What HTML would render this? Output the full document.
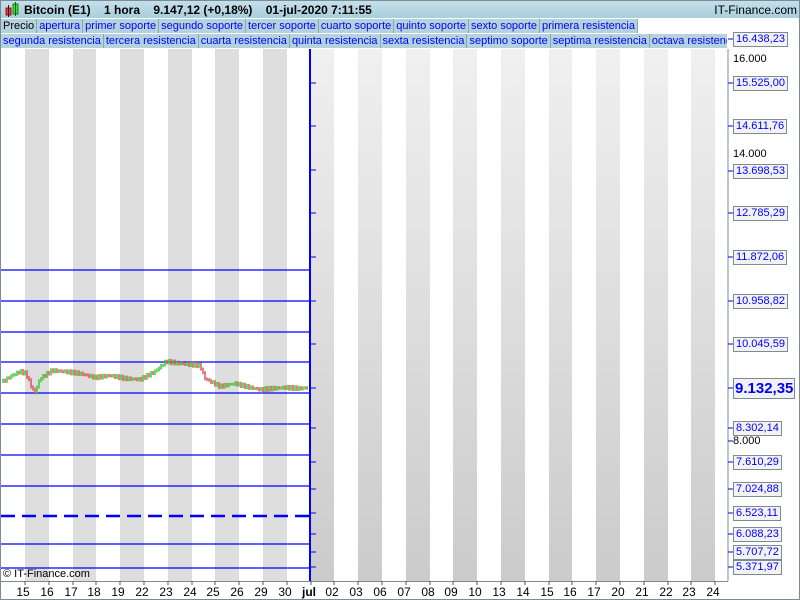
<!DOCTYPE html>
<html><head><meta charset="utf-8"><style>
body{margin:0;width:800px;height:600px;overflow:hidden;background:#fff;font-family:"Liberation Sans",sans-serif;position:relative}
#frame{position:absolute;left:0;top:0;width:798px;height:598px;border:1px solid #7a8c96}
#title{position:absolute;left:1px;top:1px;width:798px;height:17px;background:linear-gradient(#c5e0ea,#a8cedc);font-size:12px;font-weight:bold;line-height:18px}
.row{position:absolute;left:1px;height:15px;font-size:11px;line-height:14px;white-space:nowrap}
.row span{display:inline-block;background:#b4d2de;color:#00f;border-right:1px solid #8aa;padding:0 2px;margin-right:0;height:14px}
.lab{position:absolute;left:733px;font-size:11px;line-height:13px;color:#00f;background:#f2f2f2;border:1px solid #7d8c94;padding:0 2px}
.plain{position:absolute;left:733px;font-size:11px;color:#000}
.xl{position:absolute;top:585px;font-size:12px;color:#000;transform:translateX(-50%)}
</style></head><body>
<svg id="c" width="800" height="600" style="position:absolute;left:0;top:0"></svg>
<div id="frame"></div>
<div id="title"><svg width="16" height="16" style="position:absolute;left:3px;top:1px"><rect x="2" y="6" width="5" height="7" fill="#e04040" stroke="#600" stroke-width=".8"/><line x1="4.5" y1="3" x2="4.5" y2="15" stroke="#600"/><rect x="9" y="2" width="5" height="10" fill="#40e040" stroke="#060" stroke-width=".8"/><line x1="11.5" y1="0" x2="11.5" y2="14" stroke="#060"/></svg><span style="position:absolute;left:23px">Bitcoin (E1) &nbsp;&nbsp; 1 hora &nbsp;&nbsp; 9.147,12 (+0,18%) &nbsp;&nbsp; 01-jul-2020 7:11:55</span><span style="position:absolute;right:2px;font-weight:normal;font-size:12px">IT-Finance.com</span></div>
<div class="row" style="top:19px"><span style="color:#000">Precio</span><span>apertura</span><span>primer soporte</span><span>segundo soporte</span><span>tercer soporte</span><span>cuarto soporte</span><span>quinto soporte</span><span>sexto soporte</span><span>primera resistencia</span></div>
<div class="row" style="top:34px;width:726px;overflow:hidden"><span>segunda resistencia</span><span>tercera resistencia</span><span>cuarta resistencia</span><span>quinta resistencia</span><span>sexta resistencia</span><span>septimo soporte</span><span>septima resistencia</span><span>octava resistencia</span></div>
<div class="lab" style="top:32px">16.438,23</div>
<div class="plain" style="top:53px">16.000</div>
<div class="lab" style="top:76px">15.525,00</div>
<div class="lab" style="top:119px">14.611,76</div>
<div class="plain" style="top:148px">14.000</div>
<div class="lab" style="top:164px">13.698,53</div>
<div class="lab" style="top:206px">12.785,29</div>
<div class="lab" style="top:250px">11.872,06</div>
<div class="lab" style="top:294px">10.958,82</div>
<div class="lab" style="top:337px">10.045,59</div>
<div class="lab" style="top:378px;font-size:15px;font-weight:bold;line-height:19px;padding:0 1px">9.132,35</div>
<div class="lab" style="top:421px">8.302,14</div>
<div class="plain" style="top:435px">8.000</div>
<div class="lab" style="top:455px">7.610,29</div>
<div class="lab" style="top:482px">7.024,88</div>
<div class="lab" style="top:506px">6.523,11</div>
<div class="lab" style="top:527px">6.088,23</div>
<div class="lab" style="top:545px">5.707,72</div>
<div class="lab" style="top:560px">5.371,97</div>
<div style="position:absolute;left:3px;top:568px;font-size:11px">© IT-Finance.com</div>
<div id="xl"></div>
<script>
var s='';
var ticks=[];for(var i=0;i<30;i++)ticks.push(Math.round(25+i*23.8));
s+='<defs><linearGradient id="g" x1="0" y1="0" x2="0" y2="1"><stop offset="0" stop-color="#f0f0f0"/><stop offset="1" stop-color="#cbcbcb"/></linearGradient></defs>';
for(var i=0;i+1<ticks.length;i+=2){var a=ticks[i],b=Math.min(ticks[i+1],727);if(a<727)s+='<rect x="'+a+'" y="49" width="'+(b-a)+'" height="532" fill="'+(a<310?'#dedede':'url(#g)')+'"/>';}
s+='<line x1="728" y1="49" x2="728" y2="581" stroke="#7d8c94"/><line x1="1" y1="581.5" x2="728" y2="581.5" stroke="#7d8c94"/>';
var lines=[270,301,332,362,393,424,455,486,544,568];
lines.forEach(function(y){s+='<line x1="1" y1="'+y+'" x2="310" y2="'+y+'" stroke="#00f" stroke-width="1.2"/>'});
s+='<line x1="1" y1="516" x2="310" y2="516" stroke="#00f" stroke-width="2.5" stroke-dasharray="14,7"/>';
s+='<line x1="310" y1="49" x2="310" y2="581" stroke="#00f" stroke-width="2"/>';
[83,126,170,213,257,301,344,388,428,462,489,513,534,552,567].forEach(function(y){s+='<line x1="310" y1="'+y+'" x2="316" y2="'+y+'" stroke="#00f"/>'});
[39,83,126,171,213,257,301,344,388,428,441,462,489,513,534,552,567].forEach(function(y){s+='<line x1="728" y1="'+y+'" x2="733" y2="'+y+'" stroke="#00f"/>'});
var pts=[[3,381],[12,375],[20,371],[26,373],[32,388],[35,392],[40,378],[52,370],[64,371],[80,373],[95,377],[110,375],[125,378],[140,379],[155,371],[166,361],[180,363],[200,365],[205,378],[220,386],[235,383],[250,387],[260,389],[272,388],[285,387],[300,388],[309,387]];
var prev=pts[0][1];
for(var x=3;x<309;x+=2){var k=0;while(k<pts.length-2&&pts[k+1][0]<x)k++;var p=pts[k],q=pts[k+1];var y=p[1]+(q[1]-p[1])*(x-p[0])/(q[0]-p[0])+Math.sin(x*1.7)*1.5;var up=y<prev;var y1=Math.min(y,prev)-1,y2=Math.max(y,prev)+2;s+='<line x1="'+x+'" y1="'+y1+'" x2="'+x+'" y2="'+y2+'" stroke="'+(up?'#3c3':'#d55')+'" stroke-width="1.5"/>';prev=y;}
var lab=['15','16','17','18','19','22','23','24','25','26','29','30','jul','02','03','06','07','08','09','10','13','14','15','16','17','20','21','22','23','24'];
var xh='';
for(var i=0;i<lab.length;i++){if(ticks[i]>727)break;s+='<line x1="'+(ticks[i])+'" y1="581" x2="'+ticks[i]+'" y2="585" stroke="#555"/>';xh+='<div class="xl" style="left:'+(ticks[i]-2)+'px;'+(lab[i]=='jul'?'font-weight:bold':'')+'">'+lab[i]+'</div>';}
document.getElementById('c').innerHTML=s;document.getElementById('xl').innerHTML=xh;
</script>
</body></html>
